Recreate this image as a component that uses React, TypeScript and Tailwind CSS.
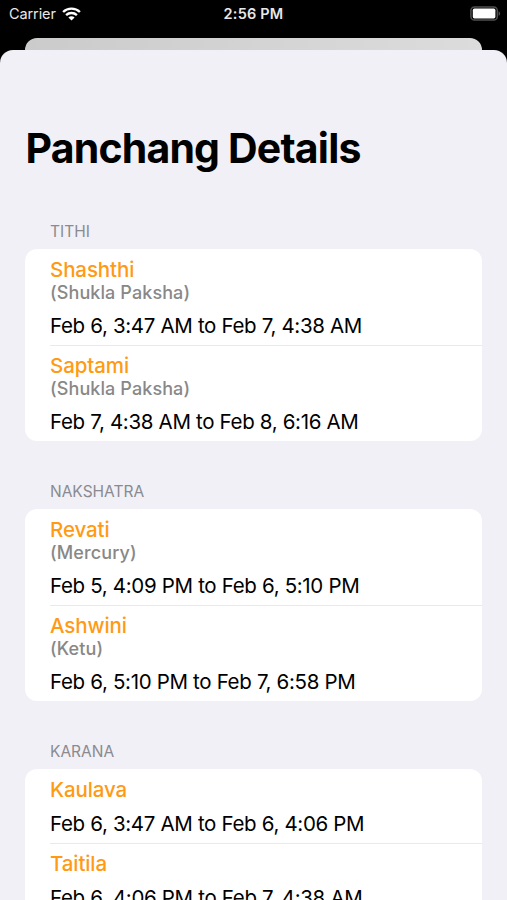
type Entry = {
    name: string;
    detail?: string;
    time: string;
};

type Section = {
    title: string;
    entries: Entry[];
};

const sections: Section[] = [
    {
        title: "Tithi",
        entries: [
            { name: "Shashthi", detail: "(Shukla Paksha)", time: "Feb 6, 3:47 AM to Feb 7, 4:38 AM" },
            { name: "Saptami", detail: "(Shukla Paksha)", time: "Feb 7, 4:38 AM to Feb 8, 6:16 AM" },
        ],
    },
    {
        title: "Nakshatra",
        entries: [
            { name: "Revati", detail: "(Mercury)", time: "Feb 5, 4:09 PM to Feb 6, 5:10 PM" },
            { name: "Ashwini", detail: "(Ketu)", time: "Feb 6, 5:10 PM to Feb 7, 6:58 PM" },
        ],
    },
    {
        title: "Karana",
        entries: [
            { name: "Kaulava", time: "Feb 6, 3:47 AM to Feb 6, 4:06 PM" },
            { name: "Taitila", time: "Feb 6, 4:06 PM to Feb 7, 4:38 AM" },
        ],
    },
];

function WifiIcon() {
    return (
        <svg width="19" height="14" viewBox="0 0 19 14" fill="none" stroke="#fff" strokeWidth="2.4">
            <path d="M1.1 5C5.7 0.5 13.3 0.5 17.9 5" />
            <path d="M4.1 8.1C7.1 5.3 11.9 5.3 14.9 8.1" />
            <path d="M9.5 13.6L6.4 10.5C8.1 8.9 10.9 8.9 12.6 10.5Z" fill="#fff" stroke="none" />
        </svg>
    );
}

function BatteryIcon() {
    return (
        <svg width="31" height="15" viewBox="0 0 31 15" fill="none">
            <rect x="0.9" y="0.9" width="26.4" height="13.2" rx="3.6" stroke="#505050" strokeWidth="1.5" />
            <rect x="2.8" y="2.6" width="22.6" height="9.8" rx="1.6" fill="#fff" />
            <path d="M28.6 5.2C30.6 6 30.6 9 28.6 9.8Z" fill="#505050" />
        </svg>
    );
}

function StatusBar() {
    return (
        <div className="grid h-[38px] grid-cols-3 items-start pt-[5px] text-[14.5px] leading-[18px] text-[#e8e8e8]">
            <div className="flex items-center gap-[6px] pl-[9px]">
                <span className="tracking-[-0.1px]">Carrier</span>
                <WifiIcon />
            </div>
            <div className="text-center font-semibold tracking-[0.2px]">2:56 PM</div>
            <div className="flex justify-end pt-[0.5px] pr-[6px]">
                <BatteryIcon />
            </div>
        </div>
    );
}

function EntryRow({ entry, last }: { entry: Entry; last: boolean }) {
    return (
        <div className="pl-[25px]">
            <div className={last ? "pt-[7px] pb-[7px]" : "border-b border-[#e9e9eb] pt-2 pb-[7px]"}>
                <div className="text-[20.5px] leading-[25px] font-medium tracking-[-0.1px] text-[#ff9a14]">{entry.name}</div>
                {entry.detail && (
                    <div className="text-[18px] leading-[22px] font-medium tracking-[0.1px] text-[#888888]">{entry.detail}</div>
                )}
                <div className="mt-[9px] text-[20.5px] leading-[25px] tracking-[-0.33px] whitespace-nowrap text-black">{entry.time}</div>
            </div>
        </div>
    );
}

export default function App() {
    return (
        <div className="flex h-[900px] w-[507px] flex-col overflow-hidden bg-black font-['Inter','Liberation_Sans',sans-serif]">
            <StatusBar />
            <div className="mx-[25px] h-3 shrink-0 rounded-t-[12px] bg-linear-to-r from-[#cbcbcb] to-[#dcdcdc]" />
            <div className="min-h-0 flex-1 overflow-hidden rounded-t-[13px] bg-[#f1f0f6] px-[25px]">
                <h1 className="mt-[73px] pl-[0.5px] text-[41px] leading-[50px] font-bold tracking-[-0.82px] text-black">Panchang Details</h1>
                <div className="mt-[8px]">
                    {sections.map((section) => (
                        <section key={section.title}>
                            <h2 className="flex h-[68px] items-end pb-[7px] pl-[25px] text-[15.5px] leading-5 text-[#8a8a90] uppercase">{section.title}</h2>
                            <div className="overflow-hidden rounded-[12px] bg-white">
                                {section.entries.map((entry, index) => (
                                    <EntryRow key={entry.name} entry={entry} last={index === section.entries.length - 1} />
                                ))}
                            </div>
                        </section>
                    ))}
                </div>
            </div>
        </div>
    );
}
